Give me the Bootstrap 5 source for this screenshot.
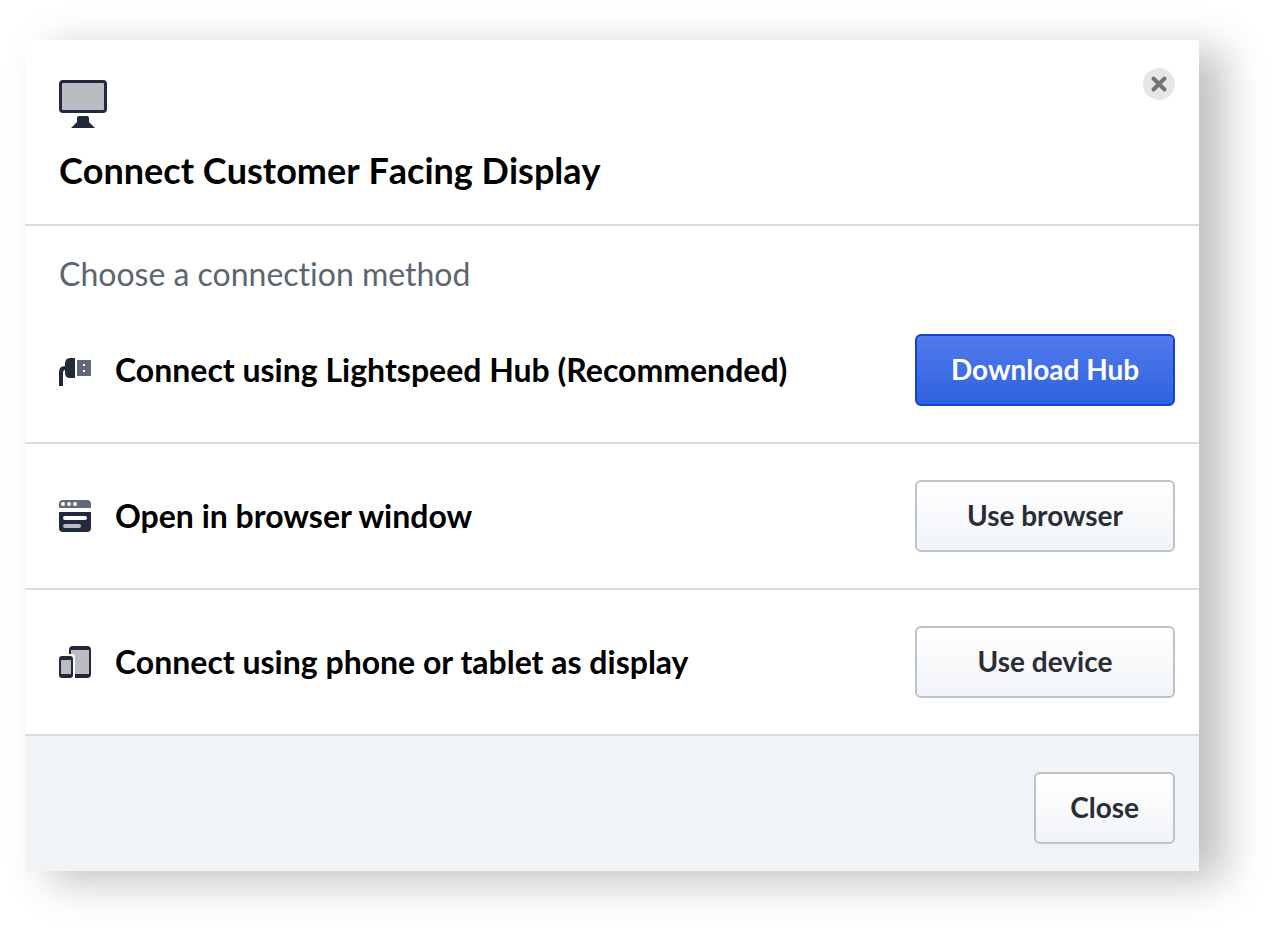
<!DOCTYPE html>
<html lang="en">
<head>
<meta charset="utf-8">
<meta name="viewport" content="width=device-width, initial-scale=1">
<title>Connect Customer Facing Display</title>
<link href="https://cdn.jsdelivr.net/npm/bootstrap@5.3.0/dist/css/bootstrap.min.css" rel="stylesheet">
<style>
  body { font-family: Lato, sans-serif; font-variant-ligatures: none; background: #fff; color: #000; }
  .page { padding: 40px 75px 60px 25px; }
  .dialog { background: #fff; box-shadow: 25px 10px 40px rgba(0, 0, 0, .25); }
  .dialog svg { display: block; flex-shrink: 0; }
  .dialog-head { padding: 40px 24px 32px 34px; border-bottom: 2px solid #d8dcdf; }
  .dialog-head h1 { font-size: 36px; line-height: 44px; font-weight: 700; font-kerning: none; margin: 20px 0 0; }
  .dismiss { top: 28px; right: 24px; width: 32px; height: 32px; background: #e6e6e6; }
  .intro { font-size: 32px; line-height: 48px; padding: 24px 24px 0 34px; color: #5d656f; }
  .method { padding: 36px 24px 36px 34px; gap: 24px; border-bottom: 2px solid #d8dcdf; }
  .method h2 { font-size: 32px; line-height: 40px; font-weight: 700; }
  .action { height: 72px; border: 2px solid #bcc3ca; border-radius: 6px; padding: 0 34px 2px; font-size: 28px; line-height: 40px; font-weight: 700; white-space: nowrap; color: #2b2d35; background: linear-gradient(#fff, #f1f4f8); }
  .action:hover { border-color: #9ca5ae; }
  .action-main, .action-main:hover { color: #fff; border-color: #1742cd; background: linear-gradient(#527bec, #2d61df); }
  .method .action { width: 260px; }
  .dialog-foot { padding: 36px 24px 27px; background: #f0f4f7; }
</style>
</head>
<body>
<main class="page">
  <section class="dialog position-relative" role="dialog" aria-labelledby="title">
    <header class="dialog-head">
      <svg width="48" height="48" viewBox="0 0 48 48" aria-hidden="true">
        <rect x="1.5" y="1.5" width="45" height="30" rx="2.5" fill="#bbbcc2" stroke="#22293d" stroke-width="3"/>
        <path d="M20 36h8q2 0 2 2v4l6 6H12l6-6v-4q0-2 2-2z" fill="#22293d"/>
      </svg>
      <h1 id="title">Connect Customer Facing Display</h1>
      <button type="button" class="dismiss btn border-0 p-0 rounded-circle position-absolute d-flex align-items-center justify-content-center" aria-label="Dismiss">
        <svg width="32" height="32" viewBox="0 0 32 32" aria-hidden="true"><path d="M10.5 10.5l11 11m0-11l-11 11" stroke="#737575" stroke-width="4" stroke-linecap="round"/></svg>
      </button>
    </header>
    <p class="intro mb-0">Choose a connection method</p>
    <div class="method d-flex align-items-center">
      <svg width="32" height="32" viewBox="0 0 32 32" aria-hidden="true">
        <path d="M16 4v20h-5q-5 0-5-5v-3q-2 0-2 3v13H0V18q0-6 6-6v-2q0-6 5-6z" fill="#22293d"/>
        <path d="M18 6h14v16H18zm6 4v2h2v-2zm0 6v2h2v-2z" fill="#646977" fill-rule="evenodd"/>
      </svg>
      <h2 class="flex-grow-1 mb-0">Connect using Lightspeed Hub (Recommended)</h2>
      <button type="button" class="btn action action-main">Download Hub</button>
    </div>
    <div class="method d-flex align-items-center">
      <svg width="32" height="32" viewBox="0 0 32 32" aria-hidden="true">
        <path d="M4 0h24q4 0 4 4v4H0V4q0-4 4-4z" fill="#646977"/>
        <path d="M0 12h32v16q0 4-4 4H4q-4 0-4-4z" fill="#22293d"/>
        <g fill="#fff"><circle cx="4" cy="4" r="2"/><circle cx="10" cy="4" r="2"/><circle cx="16" cy="4" r="2"/><rect x="4" y="16" width="24" height="4" rx="2"/></g>
        <rect x="4" y="24" width="18" height="4" rx="2" fill="#bbbcc2"/>
      </svg>
      <h2 class="flex-grow-1 mb-0">Open in browser window</h2>
      <button type="button" class="btn action">Use browser</button>
    </div>
    <div class="method d-flex align-items-center">
      <svg width="32" height="32" viewBox="0 0 32 32" aria-hidden="true">
        <rect x="10" width="22" height="32" rx="4" fill="#22293d"/><path d="M12 4h18v24H12z" fill="#bbbcc2"/>
        <path d="M8 8h5q3 0 3 3v21H8z" fill="#fff"/>
        <rect y="10" width="14" height="22" rx="3" fill="#22293d"/><path d="M2 14h10v14H2z" fill="#bbbcc2"/>
      </svg>
      <h2 class="flex-grow-1 mb-0">Connect using phone or tablet as display</h2>
      <button type="button" class="btn action">Use device</button>
    </div>
    <footer class="dialog-foot d-flex justify-content-end">
      <button type="button" class="btn action">Close</button>
    </footer>
  </section>
</main>
<script src="https://cdn.jsdelivr.net/npm/bootstrap@5.3.0/dist/js/bootstrap.bundle.min.js"></script>
</body>
</html>
